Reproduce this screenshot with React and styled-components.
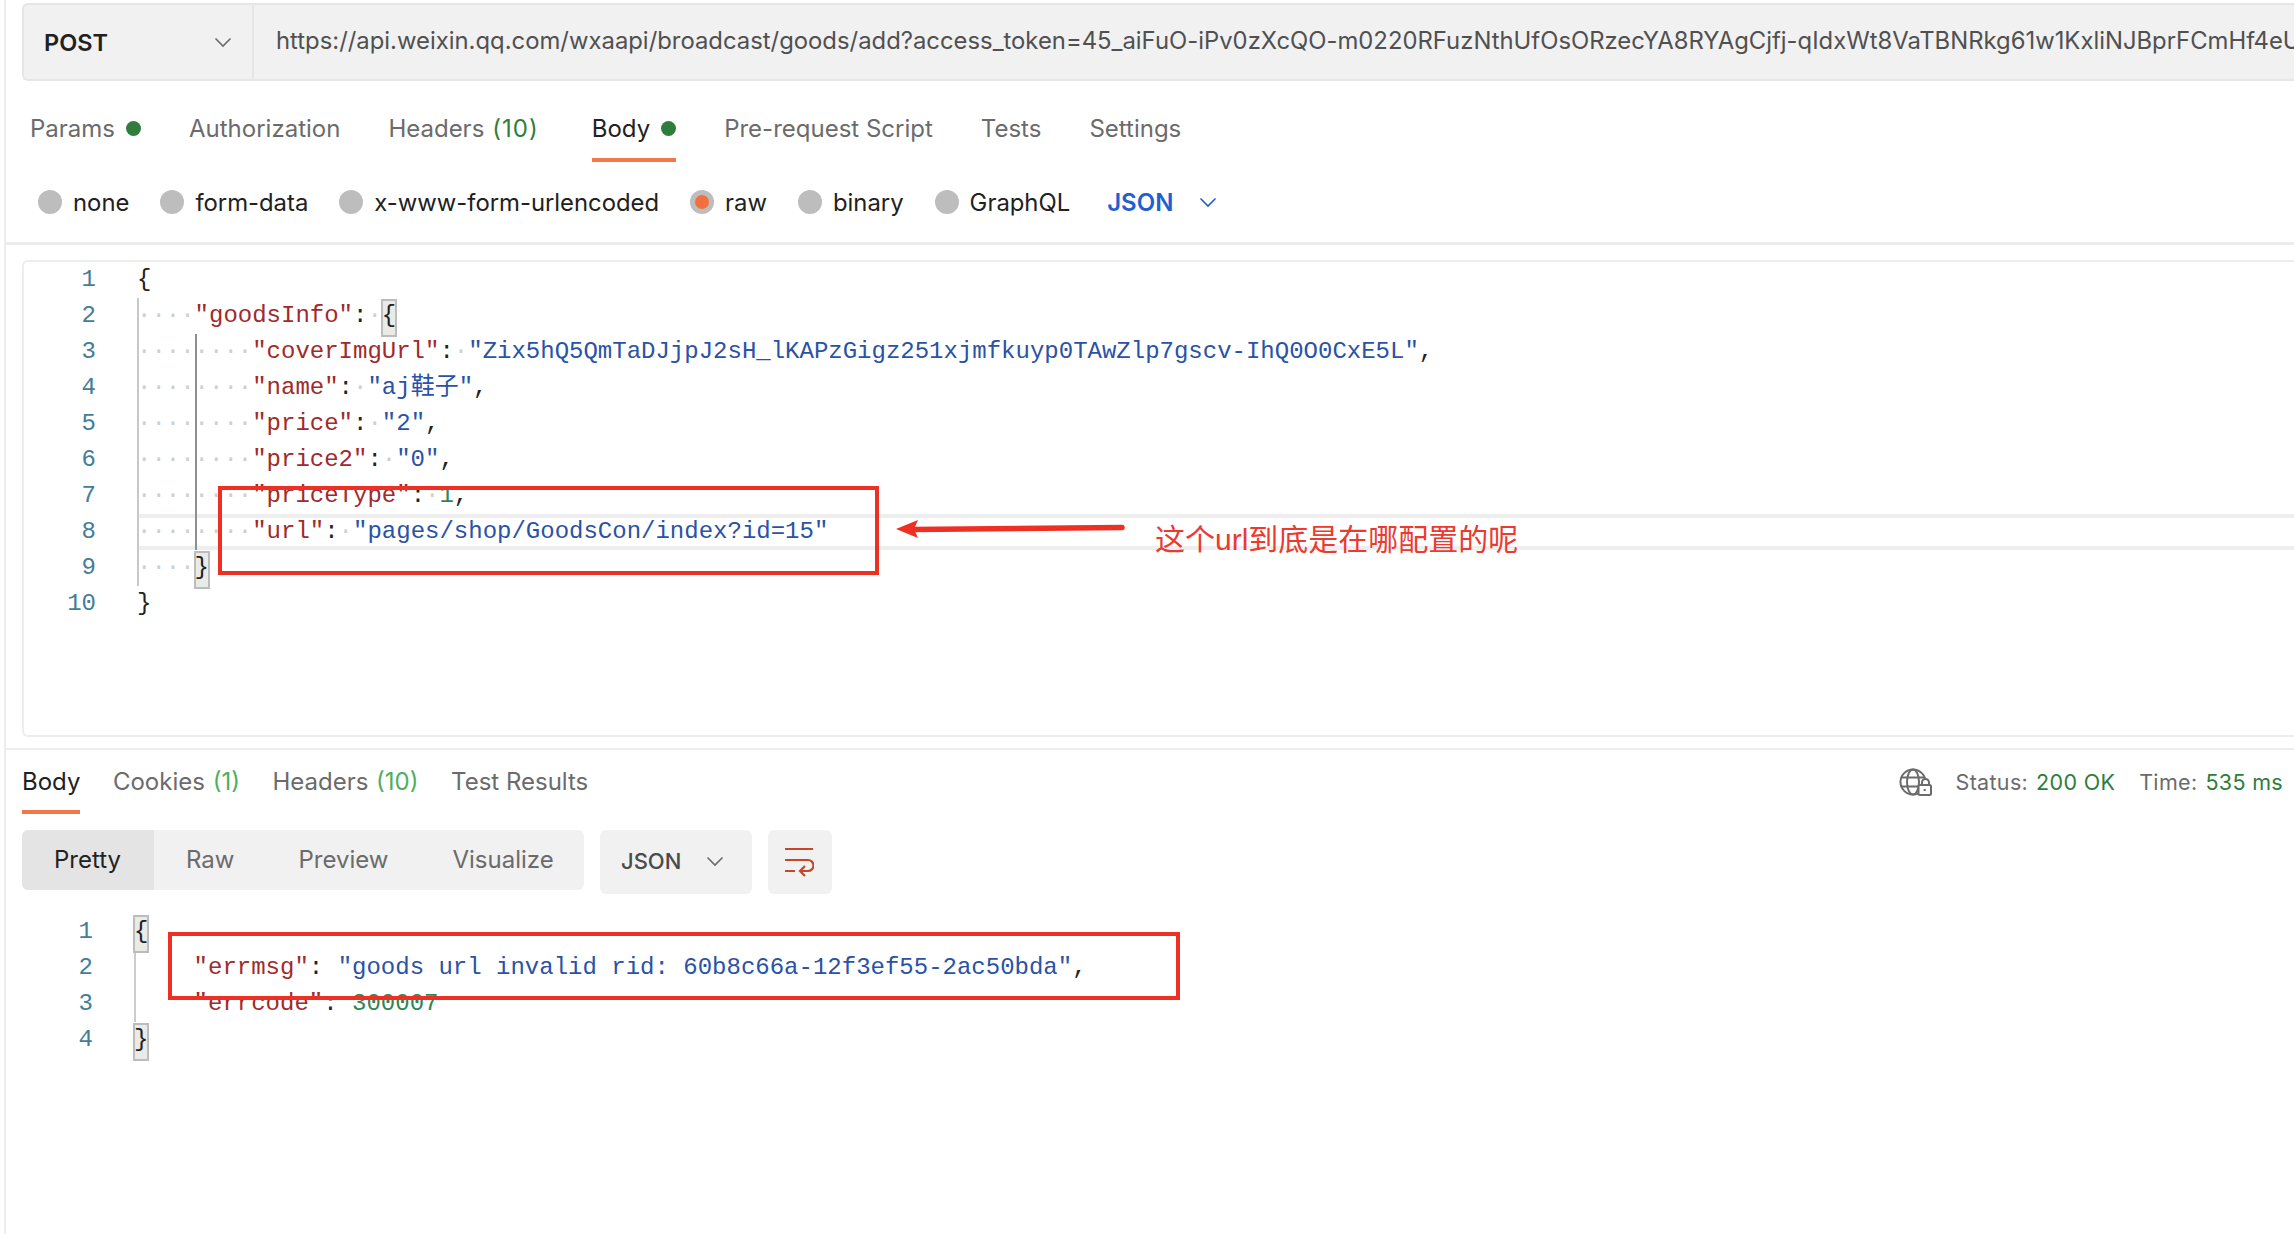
import React from "react";
import styled, { createGlobalStyle } from "styled-components";

const Global = createGlobalStyle`
  html, body { margin: 0; padding: 0; background: #fff; overflow: hidden; }
  body { font-family: Inter, "Liberation Sans", sans-serif; -webkit-font-smoothing: antialiased; }
`;

const Page = styled.div`
  position: relative;
  width: 2290px;
  height: 1234px;
  margin-left: 4px;
  box-sizing: border-box;
  border-left: 2px solid #ededed;
  overflow: hidden;
  background: #fff;
`;

const UrlBar = styled.div`
  display: flex;
  box-sizing: border-box;
  height: 78px;
  margin: 3px 0 0 16px;
  background: #f1f1f1;
  border: 2px solid #e6e6e6;
  border-right: none;
  border-radius: 6px 0 0 6px;
  overflow: hidden;
`;

const Method = styled.div`
  flex: 0 0 230px;
  box-sizing: border-box;
  display: flex;
  align-items: center;
  justify-content: space-between;
  padding: 0 20px 0 20px;
  border-right: 2px solid #e6e6e6;
  font-size: 23.5px;
  font-weight: 600;
  color: #212121;
`;

const UrlText = styled.div`
  display: flex;
  align-items: center;
  padding: 0 0 3px 22px;
  font-size: 23.85px;
  color: #505050;
  white-space: nowrap;
`;

const TabRow = styled.div`
  display: flex;
  height: 81px;
  padding-left: ${(p) => p.$left}px;
  gap: 48px;
`;

const Tab = styled.div`
  display: flex;
  align-items: center;
  gap: 11px;
  box-sizing: border-box;
  height: 100%;
  padding-top: 18px;
  font-size: 24px;
  color: ${(p) => (p.$active ? "#212121" : "#6b6b6b")};
  border-bottom: 4px solid ${(p) => (p.$active ? "#f2784b" : "transparent")};
  white-space: nowrap;
`;

const Dot = styled.span`
  width: 15px;
  height: 15px;
  border-radius: 50%;
  background: #2f7d3c;
`;

const Count = styled.span`
  color: #2f7d3c;
  margin: 0 5px 0 -3px;
  letter-spacing: 1px;
`;

const CountLight = styled.span`
  color: #4fae5e;
  margin-left: 1px;
`;

const RadioRow = styled.div`
  display: flex;
  align-items: center;
  box-sizing: border-box;
  height: 83px;
  padding-left: 32px;
  gap: 31px;
  border-bottom: 3px solid #ededed;
`;

const RadioItem = styled.div`
  display: flex;
  align-items: center;
  gap: 11px;
  font-size: 23.85px;
  color: #212121;
  white-space: nowrap;
`;

const Radio = styled.span`
  display: flex;
  align-items: center;
  justify-content: center;
  width: 24px;
  height: 24px;
  border-radius: 50%;
  background: #bdbdbd;
  &::after {
    content: "";
    width: 14px;
    height: 14px;
    border-radius: 50%;
    background: ${(p) => (p.$on ? "#f2703d" : "transparent")};
  }
`;

const FormatSelect = styled.div`
  display: flex;
  align-items: center;
  gap: 26px;
  margin-left: 6px;
  font-size: 24px;
  font-weight: 600;
  color: #1f5fd0;
`;

const Editor = styled.div`
  display: flex;
  box-sizing: border-box;
  height: 477px;
  margin: 15px 0 0 16px;
  border: 2px solid #ededed;
  border-right: none;
  border-radius: 6px 0 0 6px;
`;

const Gutter = styled.div`
  flex: 0 0 ${(p) => p.$width}px;
  box-sizing: border-box;
  text-align: right;
  font: 24px/36px "Liberation Mono", monospace;
  color: #447d99;
`;

const Code = styled.div`
  flex: 1;
  min-width: 0;
  font: 24px/36px "Liberation Mono", "Noto Sans CJK SC", monospace;
  color: #222;
  white-space: pre;
`;

const CodeCol = styled(Code)`
  margin-left: 41px;
`;

const ResponseCol = styled(Code)`
  margin-left: 43px;
`;

const Line = styled.div`
  box-sizing: border-box;
  height: 36px;
  display: flex;
  ${(p) =>
    p.$active &&
    `border-top: 4px solid #eeeeee; border-bottom: 4px solid #eeeeee; line-height: 28px;`}
`;

const Indent = styled.span`
  box-sizing: border-box;
  width: 57.6px;
  margin-top: ${(p) => (p.$active ? "-4px" : "0")};
  height: 36px;
  line-height: 36px;
  flex: none;
  color: #cfcfcf;
  border-left: 2px solid ${(p) => p.$guide};
  text-indent: -2px;
`;

const Key = styled.span`color: #a12a2a;`;
const Str = styled.span`color: #2a52a5;`;
const Num = styled.span`color: #2e8555;`;
const Ws = styled.span`color: #cfcfcf;`;

const Bracket = styled.span`
  box-sizing: border-box;
  display: inline-block;
  height: 36px;
  width: 14.4px;
  line-height: 32px;
  outline: 2px solid #bcbcbc;
  outline-offset: -1px;
  background: #e9ebe6;
`;

const Divider = styled.div`
  height: 2px;
  margin-top: 11px;
  background: #ededed;
`;

const ResponseHead = styled.div`
  display: flex;
  justify-content: space-between;
  height: 64px;
  padding: 0 11px 0 16px;
`;

const ResponseTabs = styled.div`
  display: flex;
  gap: 32.5px;
`;

const ResponseTab = styled(Tab)`
  padding-top: 2px;
  gap: 0;
`;

const Stats = styled.div`
  display: flex;
  align-items: center;
  font-size: 21.5px;
  letter-spacing: 0.32px;
  color: #6b6b6b;
  white-space: pre;
`;

const GlobeWrap = styled.span`
  display: flex;
  margin-right: 24px;
`;

const Good = styled.span`
  color: #2f7d3c;
  margin-left: 8px;
  margin-right: ${(p) => p.$end || 0}px;
`;

const Toolbar = styled.div`
  display: flex;
  gap: 16px;
  margin: 16px 0 0 16px;
  align-items: flex-start;
`;

const Segments = styled.div`
  display: flex;
  height: 60px;
  width: 562px;
  background: #f1f1f1;
  border-radius: 6px;
  overflow: hidden;
`;

const Segment = styled.div`
  display: flex;
  align-items: center;
  padding: 0 ${(p) => (p.$active ? 33 : 32)}px 2px 32px;
  font-size: 24px;
  color: ${(p) => (p.$active ? "#212121" : "#6b6b6b")};
  background: ${(p) => (p.$active ? "#e4e4e4" : "transparent")};
`;

const ToolButton = styled.div`
  display: flex;
  align-items: center;
  justify-content: ${(p) => (p.$between ? "space-between" : "center")};
  box-sizing: border-box;
  width: ${(p) => p.$w}px;
  height: 64px;
  padding: ${(p) => (p.$between ? "0 28px 2px 21px" : "0 2px 0 0")};
  background: #f1f1f1;
  border-radius: 6px;
  font-size: 22px;
  font-weight: 500;
  color: #4a4a4a;
`;

const ResponseBody = styled.div`
  display: flex;
  margin-top: 20px;
`;

const GuideLine = styled.div`
  box-sizing: border-box;
  height: 36px;
  margin-left: -2px;
  border-left: ${(p) => (p.$plain ? "none" : "2px solid #cccccc")};
`;

const RedBox = styled.div`
  position: absolute;
  box-sizing: border-box;
  left: ${(p) => p.$x}px;
  top: ${(p) => p.$y}px;
  width: ${(p) => p.$w}px;
  height: ${(p) => p.$h}px;
  border: 4px solid #ee3024;
  pointer-events: none;
`;

const ArrowDraw = styled.svg`
  position: absolute;
  left: 878px;
  top: 512px;
`;

const Note = styled.div`
  position: absolute;
  left: 1149px;
  top: 518px;
  font: 30px/44px "Liberation Sans", "Noto Sans CJK SC", sans-serif;
  color: #ec3a30;
  white-space: nowrap;
`;

const Chevron = ({ size = 18, color = "#6b6b6b" }) => (
  <svg width={size} height={size} viewBox="0 0 18 18" fill="none" stroke={color} strokeWidth="1.6">
    <path d="M1.5 5.5 9 13l7.5-7.5" />
  </svg>
);

const GlobeLock = () => (
  <svg width="33" height="28" viewBox="0 0 33 28" fill="none" stroke="#6b6b6b" strokeWidth="2">
    <circle cx="14" cy="14" r="12.5" />
    <ellipse cx="14" cy="14" rx="6" ry="12.5" />
    <path d="M2 9.5h24M2 18.5h24" />
    <path d="M23 17v-2.5a3.5 3.5 0 0 1 7 0V17" fill="#fff" />
    <rect x="19.5" y="17" width="12.5" height="10" rx="1.5" fill="#fff" />
    <path d="M25.7 21v2" />
  </svg>
);

const WrapIcon = () => (
  <svg width="30" height="32" viewBox="0 0 30 32" fill="none" stroke="#c4472a" strokeWidth="2.2">
    <path d="M1 3h28M1 14h23a5 5 0 0 1 0 11h-8M21 20l-5 5 5 5M1 25h10" />
  </svg>
);

const q = (s) => `"${s}"`;

const requestLines = [
  { level: 0, body: <span>{"{"}</span> },
  { level: 1, body: <><Key>{q("goodsInfo")}</Key>:<Ws>·</Ws><Bracket>{"{"}</Bracket></> },
  { level: 2, body: <><Key>{q("coverImgUrl")}</Key>:<Ws>·</Ws><Str>{q("Zix5hQ5QmTaDJjpJ2sH_lKAPzGigz251xjmfkuyp0TAwZlp7gscv-IhQ0O0CxE5L")}</Str>,</> },
  { level: 2, body: <><Key>{q("name")}</Key>:<Ws>·</Ws><Str>{q("aj鞋子")}</Str>,</> },
  { level: 2, body: <><Key>{q("price")}</Key>:<Ws>·</Ws><Str>{q("2")}</Str>,</> },
  { level: 2, body: <><Key>{q("price2")}</Key>:<Ws>·</Ws><Str>{q("0")}</Str>,</> },
  { level: 2, body: <><Key>{q("priceType")}</Key>:<Ws>·</Ws><Num>1</Num>,</> },
  { level: 2, active: true, body: <><Key>{q("url")}</Key>:<Ws>·</Ws><Str>{q("pages/shop/GoodsCon/index?id=15")}</Str></> },
  { level: 1, body: <Bracket>{"}"}</Bracket> },
  { level: 0, body: <span>{"}"}</span> },
];

const responseLines = [
  <Bracket>{"{"}</Bracket>,
  <><Ws>    </Ws><Key>{q("errmsg")}</Key>:<Ws> </Ws><Str>{q("goods url invalid rid: 60b8c66a-12f3ef55-2ac50bda")}</Str>,</>,
  <><Ws>    </Ws><Key>{q("errcode")}</Key>:<Ws> </Ws><Num>300007</Num></>,
  <Bracket>{"}"}</Bracket>,
];

const RequestBody = () => (
  <Editor>
    <Gutter $width={72}>
      {requestLines.map((_, i) => (
        <div key={i}>{i + 1}</div>
      ))}
    </Gutter>
    <CodeCol>
      {requestLines.map((l, i) => (
        <Line key={i} $active={l.active}>
          {l.level >= 1 && <Indent $active={l.active} $guide="#c8c8c8">····</Indent>}
          {l.level >= 2 && <Indent $active={l.active} $guide="#8f8f8f">····</Indent>}
          <span>{l.body}</span>
        </Line>
      ))}
    </CodeCol>
  </Editor>
);

export default function App() {
  return (
    <>
      <Global />
      <Page>
        <UrlBar>
          <Method>
            POST
            <Chevron />
          </Method>
          <UrlText>
            https://api.weixin.qq.com/wxaapi/broadcast/goods/add?access_token=45_aiFuO-iPv0zXcQO-m0220RFuzNthUfOsORzecYA8RYAgCjfj-qIdxWt8VaTBNRkg61w1KxliNJBprFCmHf4eU
          </UrlText>
        </UrlBar>

        <TabRow $left={24}>
          <Tab>Params<Dot /></Tab>
          <Tab>Authorization</Tab>
          <Tab>Headers<Count>(10)</Count></Tab>
          <Tab $active>Body<Dot /></Tab>
          <Tab>Pre-request Script</Tab>
          <Tab>Tests</Tab>
          <Tab>Settings</Tab>
        </TabRow>

        <RadioRow>
          <RadioItem><Radio />none</RadioItem>
          <RadioItem><Radio />form-data</RadioItem>
          <RadioItem><Radio />x-www-form-urlencoded</RadioItem>
          <RadioItem><Radio $on />raw</RadioItem>
          <RadioItem><Radio />binary</RadioItem>
          <RadioItem><Radio />GraphQL</RadioItem>
          <FormatSelect>JSON<Chevron color="#1f5fd0" /></FormatSelect>
        </RadioRow>

        <RequestBody />
        <Divider />

        <ResponseHead>
          <ResponseTabs>
            <ResponseTab $active>Body</ResponseTab>
            <ResponseTab>Cookies&nbsp;<CountLight>(1)</CountLight></ResponseTab>
            <ResponseTab>Headers&nbsp;<CountLight>(10)</CountLight></ResponseTab>
            <ResponseTab>Test Results</ResponseTab>
          </ResponseTabs>
          <Stats>
            <GlobeWrap><GlobeLock /></GlobeWrap>
            Status:<Good $end={24}>200 OK</Good>Time:<Good>535 ms</Good>
          </Stats>
        </ResponseHead>

        <Toolbar>
          <Segments>
            <Segment $active>Pretty</Segment>
            <Segment>Raw</Segment>
            <Segment>Preview</Segment>
            <Segment>Visualize</Segment>
          </Segments>
          <ToolButton $w={152} $between>JSON<Chevron /></ToolButton>
          <ToolButton $w={64}><WrapIcon /></ToolButton>
        </Toolbar>

        <ResponseBody>
          <Gutter $width={87}>
            {responseLines.map((_, i) => (
              <div key={i}>{i + 1}</div>
            ))}
          </Gutter>
          <ResponseCol>
            {responseLines.map((l, i) => (
              <GuideLine key={i} $plain={i === 0 || i === 3}>{l}</GuideLine>
            ))}
          </ResponseCol>
        </ResponseBody>

        <RedBox $x={212} $y={486} $w={661} $h={89} />
        <RedBox $x={162} $y={932} $w={1012} $h={68} />
        <ArrowDraw width="255" height="34" viewBox="0 0 255 34">
          <path d="M12 17 34 8l-4 9 4 9z" fill="#ee3024" />
          <path d="M28 17.5 238 15.5" stroke="#ee3024" strokeWidth="5.5" strokeLinecap="round" />
        </ArrowDraw>
        <Note>这个url到底是在哪配置的呢</Note>
      </Page>
    </>
  );
}
